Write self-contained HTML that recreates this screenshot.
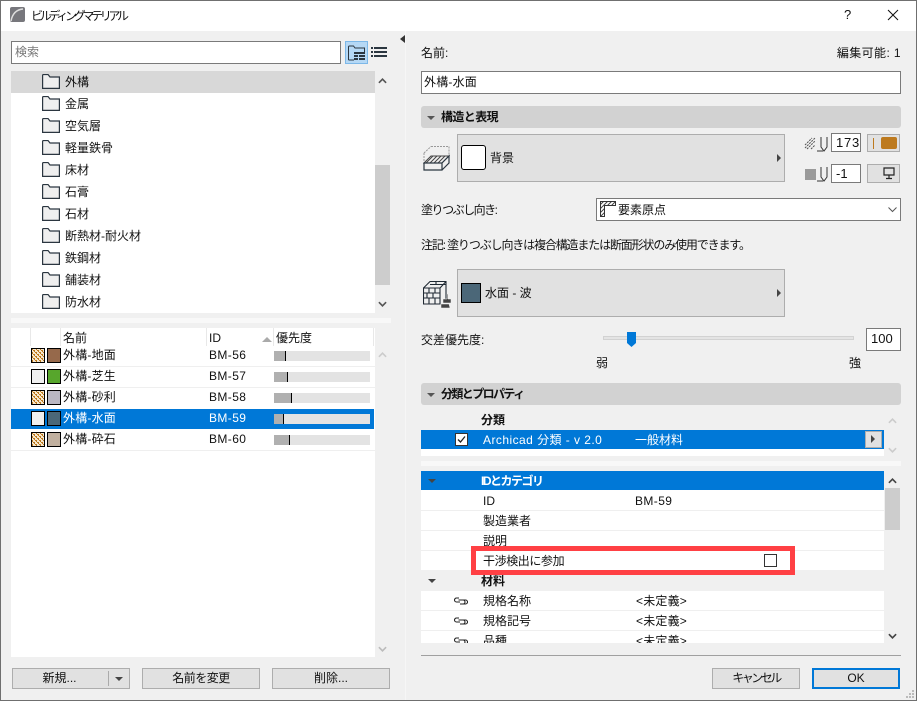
<!DOCTYPE html>
<html lang="ja"><head><meta charset="utf-8"><title>ビルディングマテリアル</title>
<style>
*{box-sizing:border-box}
html,body{margin:0;padding:0}
body{width:917px;height:701px;overflow:hidden;position:relative;background:#f0f0f0;font:12px/16px "Liberation Sans","Noto Sans CJK JP",sans-serif;color:#111}
.a,.t{position:absolute}
.t{white-space:nowrap;line-height:16px}
.w{color:#fff}
.b{font-weight:700}
.btn{position:absolute;background:#e1e1e1;border:1px solid #adadad;text-align:center;line-height:19px}
.inp{position:absolute;background:#fff;border:1px solid #7a7a7a;line-height:20px;padding-left:3px}
.sec{position:absolute;left:421px;width:480px;height:22px;background:#d2d2d2;border-radius:3px}
.tri{position:absolute;width:0;height:0;border-left:4px solid transparent;border-right:4px solid transparent;border-top:4px solid #555}
.rt{position:absolute;width:0;height:0;border-top:4px solid transparent;border-bottom:4px solid transparent;border-left:4px solid #444}
.sw{position:absolute;border:1px solid #000;width:14px;height:19px}
.bar{position:absolute;left:274px;width:96px;height:10px;background:#e3e3e3}
.bar i{position:absolute;left:0;top:0;height:10px;background:#b0b0b0;border-right:1px solid #000}
.sep{position:absolute;height:1px;background:#efefef}
</style></head><body>
<svg width="0" height="0" style="position:absolute"><defs>
<symbol id="f" viewBox="0 0 18 15"><path d="M.6 14.400V1.500q0-1 1-1h4.400l2 2.500h9.400v11.400z" fill="#efefef" stroke="#2b3640" stroke-width="1.200"/></symbol>
<symbol id="l" viewBox="0 0 14 8"><path d="M5 1H2.500a2 2 0 0 0 0 4H6M9 7h2.500a2 2 0 0 0 0-4H8M4.500 3H9a2 2 0 0 1 0 4H6" fill="none" stroke="#222" stroke-width="1.100"/></symbol>
<symbol id="u" viewBox="0 0 10 6"><path d="M1 5l4-4 4 4" fill="none" stroke="currentColor" stroke-width="1.800"/></symbol>
<symbol id="d" viewBox="0 0 10 6"><path d="M1 1l4 4 4-4" fill="none" stroke="currentColor" stroke-width="1.800"/></symbol>
<pattern id="h1" width="4" height="4" patternUnits="userSpaceOnUse"><rect width="4" height="4" fill="#f6e6cc"/><path d="M0 0h2v1H0zM2 2h2v1H2zM1 1h1v1H1zM3 3h1v1H3z" fill="#bd7a1e"/></pattern>
<pattern id="hs" width="4" height="4" patternUnits="userSpaceOnUse"><path d="M-1 1l2-2M0 4l4-4M3 5l2-2" stroke="#444" stroke-width="1"/></pattern>
</defs></svg>

<!-- window frame / title -->
<div class="a" style="left:0;top:0;width:917px;height:31px;background:#fff"></div>
<svg class="a" style="left:10px;top:7px" width="15" height="15"><rect width="15" height="15" rx="2" fill="#77777c"/><path d="M1 14Q3 3 13 2" fill="none" stroke="#ddd" stroke-width="1.500"/></svg>
<div class="t" style="left:31px;top:8px;letter-spacing:-3.3px">ビルディングマテリアル</div>
<div class="t" style="left:844px;top:7px;font-size:13px">?</div>
<svg class="a" style="left:887px;top:9px" width="12" height="12"><path d="M1 1l10 10M11 1L1 11" stroke="#111" stroke-width="1"/></svg>

<!-- left: search -->
<div class="inp" style="left:11px;top:41px;width:330px;height:23px;color:#777">検索</div>
<div class="a" style="left:345px;top:41px;width:23px;height:23px;background:#b5d8f5;border:1px solid #7db8e8"></div>
<svg class="a" style="left:348px;top:45px" width="18" height="16"><path d="M.5 15V2q0-1 1-1h4l1.500 2h9.500v4M.5 15H6" fill="none" stroke="#2b3640"/><path d="M6 7h11v2H6zM6 10h4v2H6zM11 10h6v2h-6zM6 13h4v2H6zM11 13h6v2h-6z" fill="#2b3640"/></svg>
<svg class="a" style="left:371px;top:47px" width="17" height="11"><path d="M0 0h2v2H0zM3 0h13v2H3zM0 4h2v2H0zM3 4h13v2H3zM0 8h2v2H0zM3 8h13v2H3z" fill="#2b3640"/></svg>
<div class="a" style="left:400px;top:35px;width:0;height:0;border-top:4px solid transparent;border-bottom:4px solid transparent;border-right:5px solid #333"></div>

<!-- tree -->
<div class="a" style="left:11px;top:71px;width:364px;height:242px;background:#fff"></div>
<div class="a" style="left:11px;top:71px;width:364px;height:22px;background:#d8d8d8"></div>
<div class="a" style="left:375px;top:165px;width:15px;height:120px;background:#cdcdcd"></div>
<svg class="a" style="left:378px;top:78px;color:#555" width="9" height="6"><use href="#u"/></svg>
<svg class="a" style="left:378px;top:301px;color:#555" width="9" height="6"><use href="#d"/></svg>
<svg class="a" style="left:42px;top:74px" width="18" height="15"><use href="#f"/></svg><div class="t" style="left:65px;top:74px">外構</div>
<svg class="a" style="left:42px;top:96px" width="18" height="15"><use href="#f"/></svg><div class="t" style="left:65px;top:96px">金属</div>
<svg class="a" style="left:42px;top:118px" width="18" height="15"><use href="#f"/></svg><div class="t" style="left:65px;top:118px">空気層</div>
<svg class="a" style="left:42px;top:140px" width="18" height="15"><use href="#f"/></svg><div class="t" style="left:65px;top:140px">軽量鉄骨</div>
<svg class="a" style="left:42px;top:162px" width="18" height="15"><use href="#f"/></svg><div class="t" style="left:65px;top:162px">床材</div>
<svg class="a" style="left:42px;top:184px" width="18" height="15"><use href="#f"/></svg><div class="t" style="left:65px;top:184px">石膏</div>
<svg class="a" style="left:42px;top:206px" width="18" height="15"><use href="#f"/></svg><div class="t" style="left:65px;top:206px">石材</div>
<svg class="a" style="left:42px;top:228px" width="18" height="15"><use href="#f"/></svg><div class="t" style="left:65px;top:228px">断熱材-耐火材</div>
<svg class="a" style="left:42px;top:250px" width="18" height="15"><use href="#f"/></svg><div class="t" style="left:65px;top:250px">鉄鋼材</div>
<svg class="a" style="left:42px;top:272px" width="18" height="15"><use href="#f"/></svg><div class="t" style="left:65px;top:272px">舗装材</div>
<svg class="a" style="left:42px;top:294px" width="18" height="15"><use href="#f"/></svg><div class="t" style="left:65px;top:294px">防水材</div>

<div class="a" style="left:11px;top:318px;width:380px;height:5px;background:#f8f8f8"></div>

<!-- list -->
<div class="a" style="left:11px;top:328px;width:364px;height:329px;background:#fff"></div>
<div class="a" style="left:30px;top:328px;width:1px;height:18px;background:#e8e8e8"></div>
<div class="a" style="left:60px;top:328px;width:1px;height:18px;background:#e8e8e8"></div>
<div class="a" style="left:206px;top:328px;width:1px;height:18px;background:#e8e8e8"></div>
<div class="a" style="left:273px;top:328px;width:1px;height:18px;background:#e8e8e8"></div>
<div class="a" style="left:373px;top:328px;width:1px;height:18px;background:#e8e8e8"></div>
<div class="t" style="left:63px;top:330px">名前</div>
<div class="t" style="left:209px;top:330px">ID</div>
<div class="a" style="left:262px;top:337px;width:0;height:0;border-left:5px solid transparent;border-right:5px solid transparent;border-bottom:5px solid #aaa"></div>
<div class="t" style="left:276px;top:330px">優先度</div>
<div class="sep" style="left:11px;top:366px;width:364px"></div>
<div class="sep" style="left:11px;top:387px;width:364px"></div>
<div class="sep" style="left:11px;top:450px;width:364px"></div>
<div class="a" style="left:11px;top:409px;width:363px;height:20px;background:#0078d7"></div>

<svg class="a" style="left:31px;top:348px" width="14" height="15"><rect x=".5" y=".5" width="13" height="14" fill="url(#h1)" stroke="#000"/></svg>
<div class="sw" style="left:47px;top:348px;height:15px;background:#96694b"></div>
<div class="t" style="left:63px;top:347px;letter-spacing:.2px">外構-地面</div><div class="t" style="left:209px;top:347px;letter-spacing:.4px">BM-56</div>
<div class="bar" style="top:351px"><i style="width:12px"></i></div>

<div class="sw" style="left:31px;top:369px;height:15px;background:#f0f0f0"></div>
<div class="sw" style="left:47px;top:369px;height:15px;background:#57a62c"></div>
<div class="t" style="left:63px;top:368px;letter-spacing:.2px">外構-芝生</div><div class="t" style="left:209px;top:368px;letter-spacing:.4px">BM-57</div>
<div class="bar" style="top:372px"><i style="width:14px"></i></div>

<svg class="a" style="left:31px;top:390px" width="14" height="15"><rect x=".5" y=".5" width="13" height="14" fill="url(#h1)" stroke="#000"/></svg>
<div class="sw" style="left:47px;top:390px;height:15px;background:#b9b7c3"></div>
<div class="t" style="left:63px;top:389px;letter-spacing:.2px">外構-砂利</div><div class="t" style="left:209px;top:389px;letter-spacing:.4px">BM-58</div>
<div class="bar" style="top:393px"><i style="width:18px"></i></div>

<div class="sw" style="left:31px;top:411px;height:15px;background:#f0f0f0"></div>
<div class="sw" style="left:47px;top:411px;height:15px;background:#4b6778"></div>
<div class="t w" style="left:63px;top:410px;letter-spacing:.2px">外構-水面</div><div class="t w" style="left:209px;top:410px;letter-spacing:.4px">BM-59</div>
<div class="bar" style="top:414px"><i style="width:10px"></i></div>

<svg class="a" style="left:31px;top:432px" width="14" height="15"><rect x=".5" y=".5" width="13" height="14" fill="url(#h1)" stroke="#000"/></svg>
<div class="sw" style="left:47px;top:432px;height:15px;background:#c1b09f"></div>
<div class="t" style="left:63px;top:431px;letter-spacing:.2px">外構-砕石</div><div class="t" style="left:209px;top:431px;letter-spacing:.4px">BM-60</div>
<div class="bar" style="top:435px"><i style="width:16px"></i></div>

<svg class="a" style="left:378px;top:352px;color:#ccc" width="9" height="6"><use href="#u"/></svg>
<svg class="a" style="left:378px;top:646px;color:#bbb" width="9" height="6"><use href="#d"/></svg>

<!-- left buttons -->
<div class="btn" style="left:12px;top:668px;width:118px;height:21px;padding-right:23px">新規...</div>
<div class="a" style="left:108px;top:671px;width:1px;height:15px;background:#aaa"></div>
<div class="tri" style="left:115px;top:677px;border-top-color:#444"></div>
<div class="btn" style="left:142px;top:668px;width:118px;height:21px;letter-spacing:-.5px">名前を変更</div>
<div class="btn" style="left:272px;top:668px;width:118px;height:21px">削除...</div>

<!-- right panel -->
<div class="a" style="left:405px;top:31px;width:1px;height:669px;background:#f6f6f6"></div>
<div class="t" style="left:421px;top:45px">名前:</div>
<div class="t" style="right:16px;top:45px;letter-spacing:.4px">編集可能: 1</div>
<div class="inp" style="left:421px;top:71px;width:480px;height:23px;letter-spacing:.2px;padding-left:2px">外構-水面</div>

<div class="sec" style="top:106px"></div>
<div class="tri" style="left:427px;top:116px"></div>
<div class="t b" style="left:441px;top:109px;letter-spacing:-.6px">構造と表現</div>

<svg class="a" style="left:423px;top:146px" width="27" height="26"><path d="M8 .5h18M26 .5v11M1 7l7-6.500M1 7v9" fill="none" stroke="#999" stroke-dasharray="2 1"/><path d="M1 17L8 10H26L19 17z" fill="url(#hs)" stroke="#444"/><path d="M1 17h18v7H1zM19 17l7-7v7l-7 7" fill="#f0f0f0" stroke="#2b3640" stroke-width="1.200"/></svg>
<div class="btn" style="left:457px;top:134px;width:328px;height:48px"></div>
<div class="a" style="left:461px;top:145px;width:25px;height:25px;background:#fff;border:1px solid #000;border-radius:3px"></div>
<div class="t" style="left:490px;top:150px">背景</div>
<div class="rt" style="left:777px;top:154px"></div>

<svg class="a" style="left:804px;top:136px" width="28" height="19"><path d="M1 9l7-7M1 12l10-10M3 13l8-8M7 13l4-4" stroke="#555" fill="none" stroke-dasharray="2 1"/><path d="M13 15h6M17 1v10l3 4 3-4V1" stroke="#333" fill="none"/></svg>
<div class="inp" style="left:831px;top:133px;width:30px;height:19px;line-height:17px;padding-left:4px;letter-spacing:.8px;font-size:13px">173</div>
<div class="btn" style="left:867px;top:134px;width:33px;height:18px"></div>
<div class="a" style="left:873px;top:138px;width:1px;height:11px;background:#bd7a1e"></div>
<div class="a" style="left:881px;top:137px;width:16px;height:12px;background:#bd7a1e;border-radius:2px"></div>

<div class="a" style="left:805px;top:169px;width:11px;height:11px;background:#9a9a9a"></div>
<svg class="a" style="left:804px;top:166px" width="28" height="19"><path d="M13 15h6M17 1v10l3 4 3-4V1" stroke="#333" fill="none"/></svg>
<div class="inp" style="left:831px;top:164px;width:30px;height:19px;line-height:17px;padding-left:4px;font-size:13px">-1</div>
<div class="btn" style="left:867px;top:164px;width:33px;height:19px"></div>
<svg class="a" style="left:883px;top:167px" width="12" height="13"><path d="M1 1h10v7H1zM6 8v3M3 11.500h6" fill="none" stroke="#222" stroke-width="1.200"/></svg>

<div class="t" style="left:421px;top:202px;letter-spacing:-1.500px">塗りつぶし向き:</div>
<div class="inp" style="left:596px;top:198px;width:305px;height:23px"></div>
<svg class="a" style="left:600px;top:201px" width="16" height="16"><path d="M.5.500h15v4h-11v11h-4z" fill="url(#hs)" stroke="#333"/></svg>
<div class="t" style="left:618px;top:202px">要素原点</div>
<svg class="a" style="left:888px;top:207px;color:#555" width="9" height="6"><path d="M.5.500L4.500 4.500 8.500.500" fill="none" stroke="#555"/></svg>

<div class="t" style="left:421px;top:237px;letter-spacing:-1.150px">注記: 塗りつぶし向きは複合構造または断面形状のみ使用できます。</div>

<svg class="a" style="left:423px;top:280px" width="28" height="29"><path d="M.5 8L7 1.500h16V21M.5 8H17V24H.5zM17 8l6-6.500M.5 13h16M.5 18h16M6 8v5M12 8v5M4 13v5M10 13v5M6 18v6M12 18v6M7 4.500h16M13 1.500v3" fill="none" stroke="#1f2933" stroke-width="1.100"/><path d="M20 19h4v-5h1v5h3v4h-8zM18 24h8l1 4h-9z" fill="#444" stroke="#f0f0f0" stroke-width=".5"/></svg>
<div class="btn" style="left:457px;top:269px;width:328px;height:48px"></div>
<div class="a" style="left:461px;top:283px;width:20px;height:20px;background:#4b6778;border:1px solid #000"></div>
<div class="t" style="left:485px;top:285px">水面 - 波</div>
<div class="rt" style="left:777px;top:289px"></div>

<div class="t" style="left:421px;top:332px">交差優先度:</div>
<div class="a" style="left:603px;top:336px;width:251px;height:4px;background:#e4e4e4;border:1px solid #d2d2d2"></div>
<svg class="a" style="left:627px;top:332px" width="10" height="16"><path d="M0 0h9v11l-4.500 4L0 11z" fill="#0078d7"/></svg>
<div class="inp" style="left:866px;top:328px;width:35px;height:23px;padding-left:4px;background:#fff;font-size:13px">100</div>
<div class="t" style="left:596px;top:355px">弱</div>
<div class="t" style="left:849px;top:355px">強</div>

<div class="sec" style="top:383px"></div>
<div class="tri" style="left:427px;top:393px"></div>
<div class="t b" style="left:441px;top:386px;letter-spacing:-1.600px">分類とプロパティ</div>

<div class="a" style="left:421px;top:410px;width:463px;height:46px;background:#fff"></div>
<div class="a" style="left:421px;top:410px;width:463px;height:20px;background:#f0f0f0"></div>
<div class="t b" style="left:481px;top:412px">分類</div>
<div class="a" style="left:421px;top:430px;width:463px;height:19px;background:#0078d7"></div>
<svg class="a" style="left:455px;top:433px" width="13" height="13"><rect x=".5" y=".5" width="12" height="12" fill="#fff" stroke="#333"/><path d="M3 6.500l2.500 2.500L10 3.500" fill="none" stroke="#222" stroke-width="1.300"/></svg>
<div class="t w" style="left:483px;top:432px;letter-spacing:.45px">Archicad 分類 - v 2.0</div>
<div class="t w" style="left:635px;top:432px">一般材料</div>
<div class="btn" style="left:865px;top:431px;width:17px;height:17px"></div>
<div class="rt" style="left:871px;top:435px"></div>
<svg class="a" style="left:888px;top:418px;color:#ccc" width="9" height="6"><use href="#u"/></svg>
<svg class="a" style="left:888px;top:447px;color:#ccc" width="9" height="6"><use href="#d"/></svg>

<div class="a" style="left:421px;top:461px;width:480px;height:5px;background:#f8f8f8"></div>

<div class="a" style="left:421px;top:471px;width:463px;height:172px;background:#fff"></div>
<div class="a" style="left:421px;top:471px;width:463px;height:19px;background:#0078d7"></div>
<div class="tri" style="left:428px;top:479px;border-top-color:#444"></div>
<div class="t b w" style="left:481px;top:473px;letter-spacing:-1.500px">IDとカテゴリ</div>
<div class="t" style="left:483px;top:493px">ID</div>
<div class="t" style="left:635px;top:493px;letter-spacing:.4px">BM-59</div>
<div class="sep" style="left:421px;top:510px;width:463px"></div>
<div class="t" style="left:483px;top:513px">製造業者</div>
<div class="sep" style="left:421px;top:530px;width:463px"></div>
<div class="t" style="left:483px;top:533px">説明</div>
<div class="sep" style="left:421px;top:550px;width:463px"></div>
<div class="t" style="left:483px;top:553px;letter-spacing:-.4px">干渉検出に参加</div>
<div class="a" style="left:764px;top:554px;width:13px;height:13px;background:#fff;border:1px solid #333"></div>
<div class="a" style="left:421px;top:570px;width:463px;height:21px;background:#f0f0f0"></div>
<div class="tri" style="left:428px;top:579px;border-top-color:#444"></div>
<div class="t b" style="left:481px;top:573px">材料</div>
<svg class="a" style="left:454px;top:597px" width="14" height="8"><use href="#l"/></svg>
<div class="t" style="left:483px;top:593px">規格名称</div><div class="t" style="left:636px;top:593px;letter-spacing:.2px">&lt;未定義&gt;</div>
<div class="sep" style="left:421px;top:610px;width:463px"></div>
<svg class="a" style="left:454px;top:617px" width="14" height="8"><use href="#l"/></svg>
<div class="t" style="left:483px;top:613px">規格記号</div><div class="t" style="left:636px;top:613px;letter-spacing:.2px">&lt;未定義&gt;</div>
<div class="sep" style="left:421px;top:630px;width:463px"></div>
<div class="a" style="left:421px;top:631px;width:463px;height:12px;overflow:hidden">
<svg class="a" style="left:33px;top:6px" width="14" height="8"><use href="#l"/></svg>
<div class="t" style="left:62px;top:2px">品種</div><div class="t" style="left:215px;top:2px;letter-spacing:.2px">&lt;未定義&gt;</div></div>
<div class="a" style="left:885px;top:488px;width:15px;height:42px;background:#cdcdcd"></div>
<svg class="a" style="left:888px;top:478px;color:#444" width="9" height="6"><use href="#u"/></svg>
<svg class="a" style="left:888px;top:633px;color:#444" width="9" height="6"><use href="#d"/></svg>

<div class="a" style="left:471px;top:546px;width:324px;height:29px;border:5px solid #ff4044"></div>

<div class="a" style="left:421px;top:655px;width:480px;height:1px;background:#a0a0a0"></div>
<div class="btn" style="left:712px;top:668px;width:88px;height:21px;letter-spacing:-2.500px">キャンセル</div>
<div class="btn" style="left:812px;top:668px;width:88px;height:21px;border:2px solid #0078d7;line-height:17px">OK</div>
<svg class="a" style="left:905px;top:689px" width="10" height="10"><path d="M7 1h2v2H7zM4 4h2v2H4zM7 4h2v2H7zM1 7h2v2H1zM4 7h2v2H4zM7 7h2v2H7z" fill="#bbb"/></svg>

<!-- window border -->
<div class="a" style="left:0;top:0;width:917px;height:701px;border:1px solid #6f6f6f;border-top-color:#707070;pointer-events:none"></div>
</body></html>
